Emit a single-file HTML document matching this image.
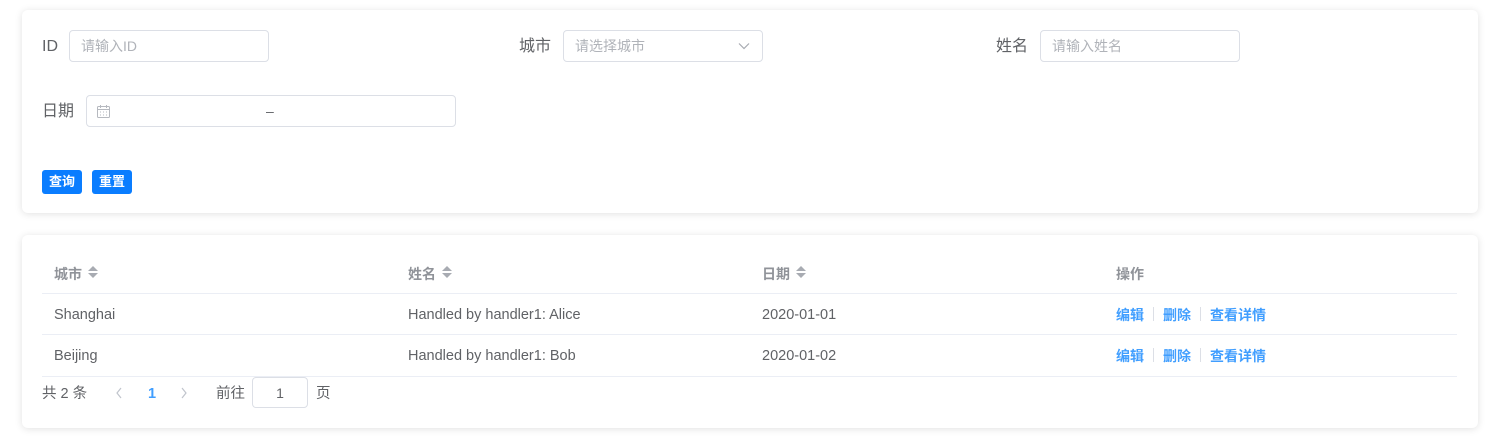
<!DOCTYPE html>
<html><head><meta charset="utf-8"><style>
*{box-sizing:border-box;margin:0;padding:0}
body{width:1499px;height:448px;background:#fff;font-family:"Liberation Sans","Noto Sans CJK SC",sans-serif;color:#606266;position:relative;overflow:hidden}
.card{position:absolute;left:22px;width:1456px;background:#fff;border-radius:6px;box-shadow:0 1px 8px rgba(0,0,0,0.12)}
.a{position:absolute}
.lbl{font-size:16px;color:#606266;height:32px;line-height:32px}
.inp{position:absolute;height:32px;border:1px solid #dcdfe6;border-radius:4px;font-size:14px;color:#b0b3b9;padding-left:11px;line-height:30px}
.btn{position:absolute;top:170px;width:40px;height:24px;background:#0a7dff;color:#fff;font-size:13px;font-weight:bold;border-radius:3px;text-align:center;line-height:24px}
.th{position:absolute;top:264px;line-height:20px;font-size:14px;font-weight:bold;color:#909399}
.td{position:absolute;font-size:14.5px;color:#606266;line-height:20px}
.line{position:absolute;left:42px;width:1415px;height:1px;background:#ebeef5}
.sort{display:inline-block;vertical-align:middle;margin-left:6px;width:10px;height:14px;position:relative;top:-2px}
.sort:before{content:"";position:absolute;left:0;top:0;border:5px solid transparent;border-bottom:5px solid #a8abb2;border-top:0}
.sort:after{content:"";position:absolute;left:0;top:7px;border:5px solid transparent;border-top:5px solid #a8abb2;border-bottom:0}
.op{position:absolute;left:1116px;font-size:14px;color:#409eff;font-weight:bold;line-height:20px}
.op i{display:inline-block;width:1px;height:14px;background:#dcdfe6;margin:0 9px;vertical-align:-1px}
</style></head><body>
<div class="card" style="top:10px;height:203px"></div>
<div class="card" style="top:235px;height:193px"></div>

<div class="a lbl" style="left:42px;top:31px">ID</div>
<div class="inp" style="left:69px;top:30px;width:200px">请输入ID</div>
<div class="a lbl" style="left:519px;top:31px">城市</div>
<div class="inp" style="left:563px;top:30px;width:200px">请选择城市
<svg style="position:absolute;right:12px;top:11px" width="12" height="8" viewBox="0 0 12 8"><path d="M1 1.5L6 6.5L11 1.5" fill="none" stroke="#a8abb2" stroke-width="1.2"/></svg></div>
<div class="a lbl" style="left:996px;top:31px">姓名</div>
<div class="inp" style="left:1040px;top:30px;width:200px">请输入姓名</div>

<div class="a lbl" style="left:42px;top:96px">日期</div>
<div class="inp" style="left:86px;top:95px;width:370px">
<svg style="position:absolute;left:10px;top:9px" width="13" height="13" viewBox="0 0 13 13"><rect x="0.5" y="1.5" width="12" height="11" rx="1" fill="none" stroke="#b6b9bf"/><path d="M0.5 4.5H12.5M3.5 0v3M9.5 0v3" stroke="#b6b9bf"/><path d="M3 7h1M6 7h1M9 7h1M3 10h1M6 10h1M9 10h1" stroke="#b6b9bf"/></svg>
<span style="position:absolute;left:179px;top:0;color:#606266">–</span></div>

<div class="btn" style="left:42px">查询</div>
<div class="btn" style="left:92px">重置</div>

<div class="th" style="left:54px">城市<span class="sort"></span></div>
<div class="th" style="left:408px">姓名<span class="sort"></span></div>
<div class="th" style="left:762px">日期<span class="sort"></span></div>
<div class="th" style="left:1116px">操作</div>
<div class="line" style="top:293px"></div>
<div class="td" style="left:54px;top:305px">Shanghai</div>
<div class="td" style="left:408px;top:305px">Handled by handler1: Alice</div>
<div class="td" style="left:762px;top:305px">2020-01-01</div>
<div class="op" style="top:305px">编辑<i></i>删除<i></i>查看详情</div>
<div class="line" style="top:334px"></div>
<div class="td" style="left:54px;top:346px">Beijing</div>
<div class="td" style="left:408px;top:346px">Handled by handler1: Bob</div>
<div class="td" style="left:762px;top:346px">2020-01-02</div>
<div class="op" style="top:346px">编辑<i></i>删除<i></i>查看详情</div>
<div class="line" style="top:376px"></div>

<div class="td" style="left:42px;top:384px">共 2 条</div>
<svg class="a" style="left:115px;top:387px" width="8" height="12" viewBox="0 0 8 12"><path d="M6 1L2 6L6 11" fill="none" stroke="#c0c4cc" stroke-width="1.2"/></svg>
<div class="td" style="left:148px;top:384px;color:#409eff;font-weight:bold">1</div>
<svg class="a" style="left:180px;top:387px" width="8" height="12" viewBox="0 0 8 12"><path d="M2 1L6 6L2 11" fill="none" stroke="#c0c4cc" stroke-width="1.2"/></svg>
<div class="td" style="left:216px;top:384px">前往</div>
<div class="inp" style="left:252px;top:377px;width:56px;height:31px;padding:0;text-align:center;color:#606266">1</div>
<div class="td" style="left:316px;top:384px">页</div>
</body></html>
